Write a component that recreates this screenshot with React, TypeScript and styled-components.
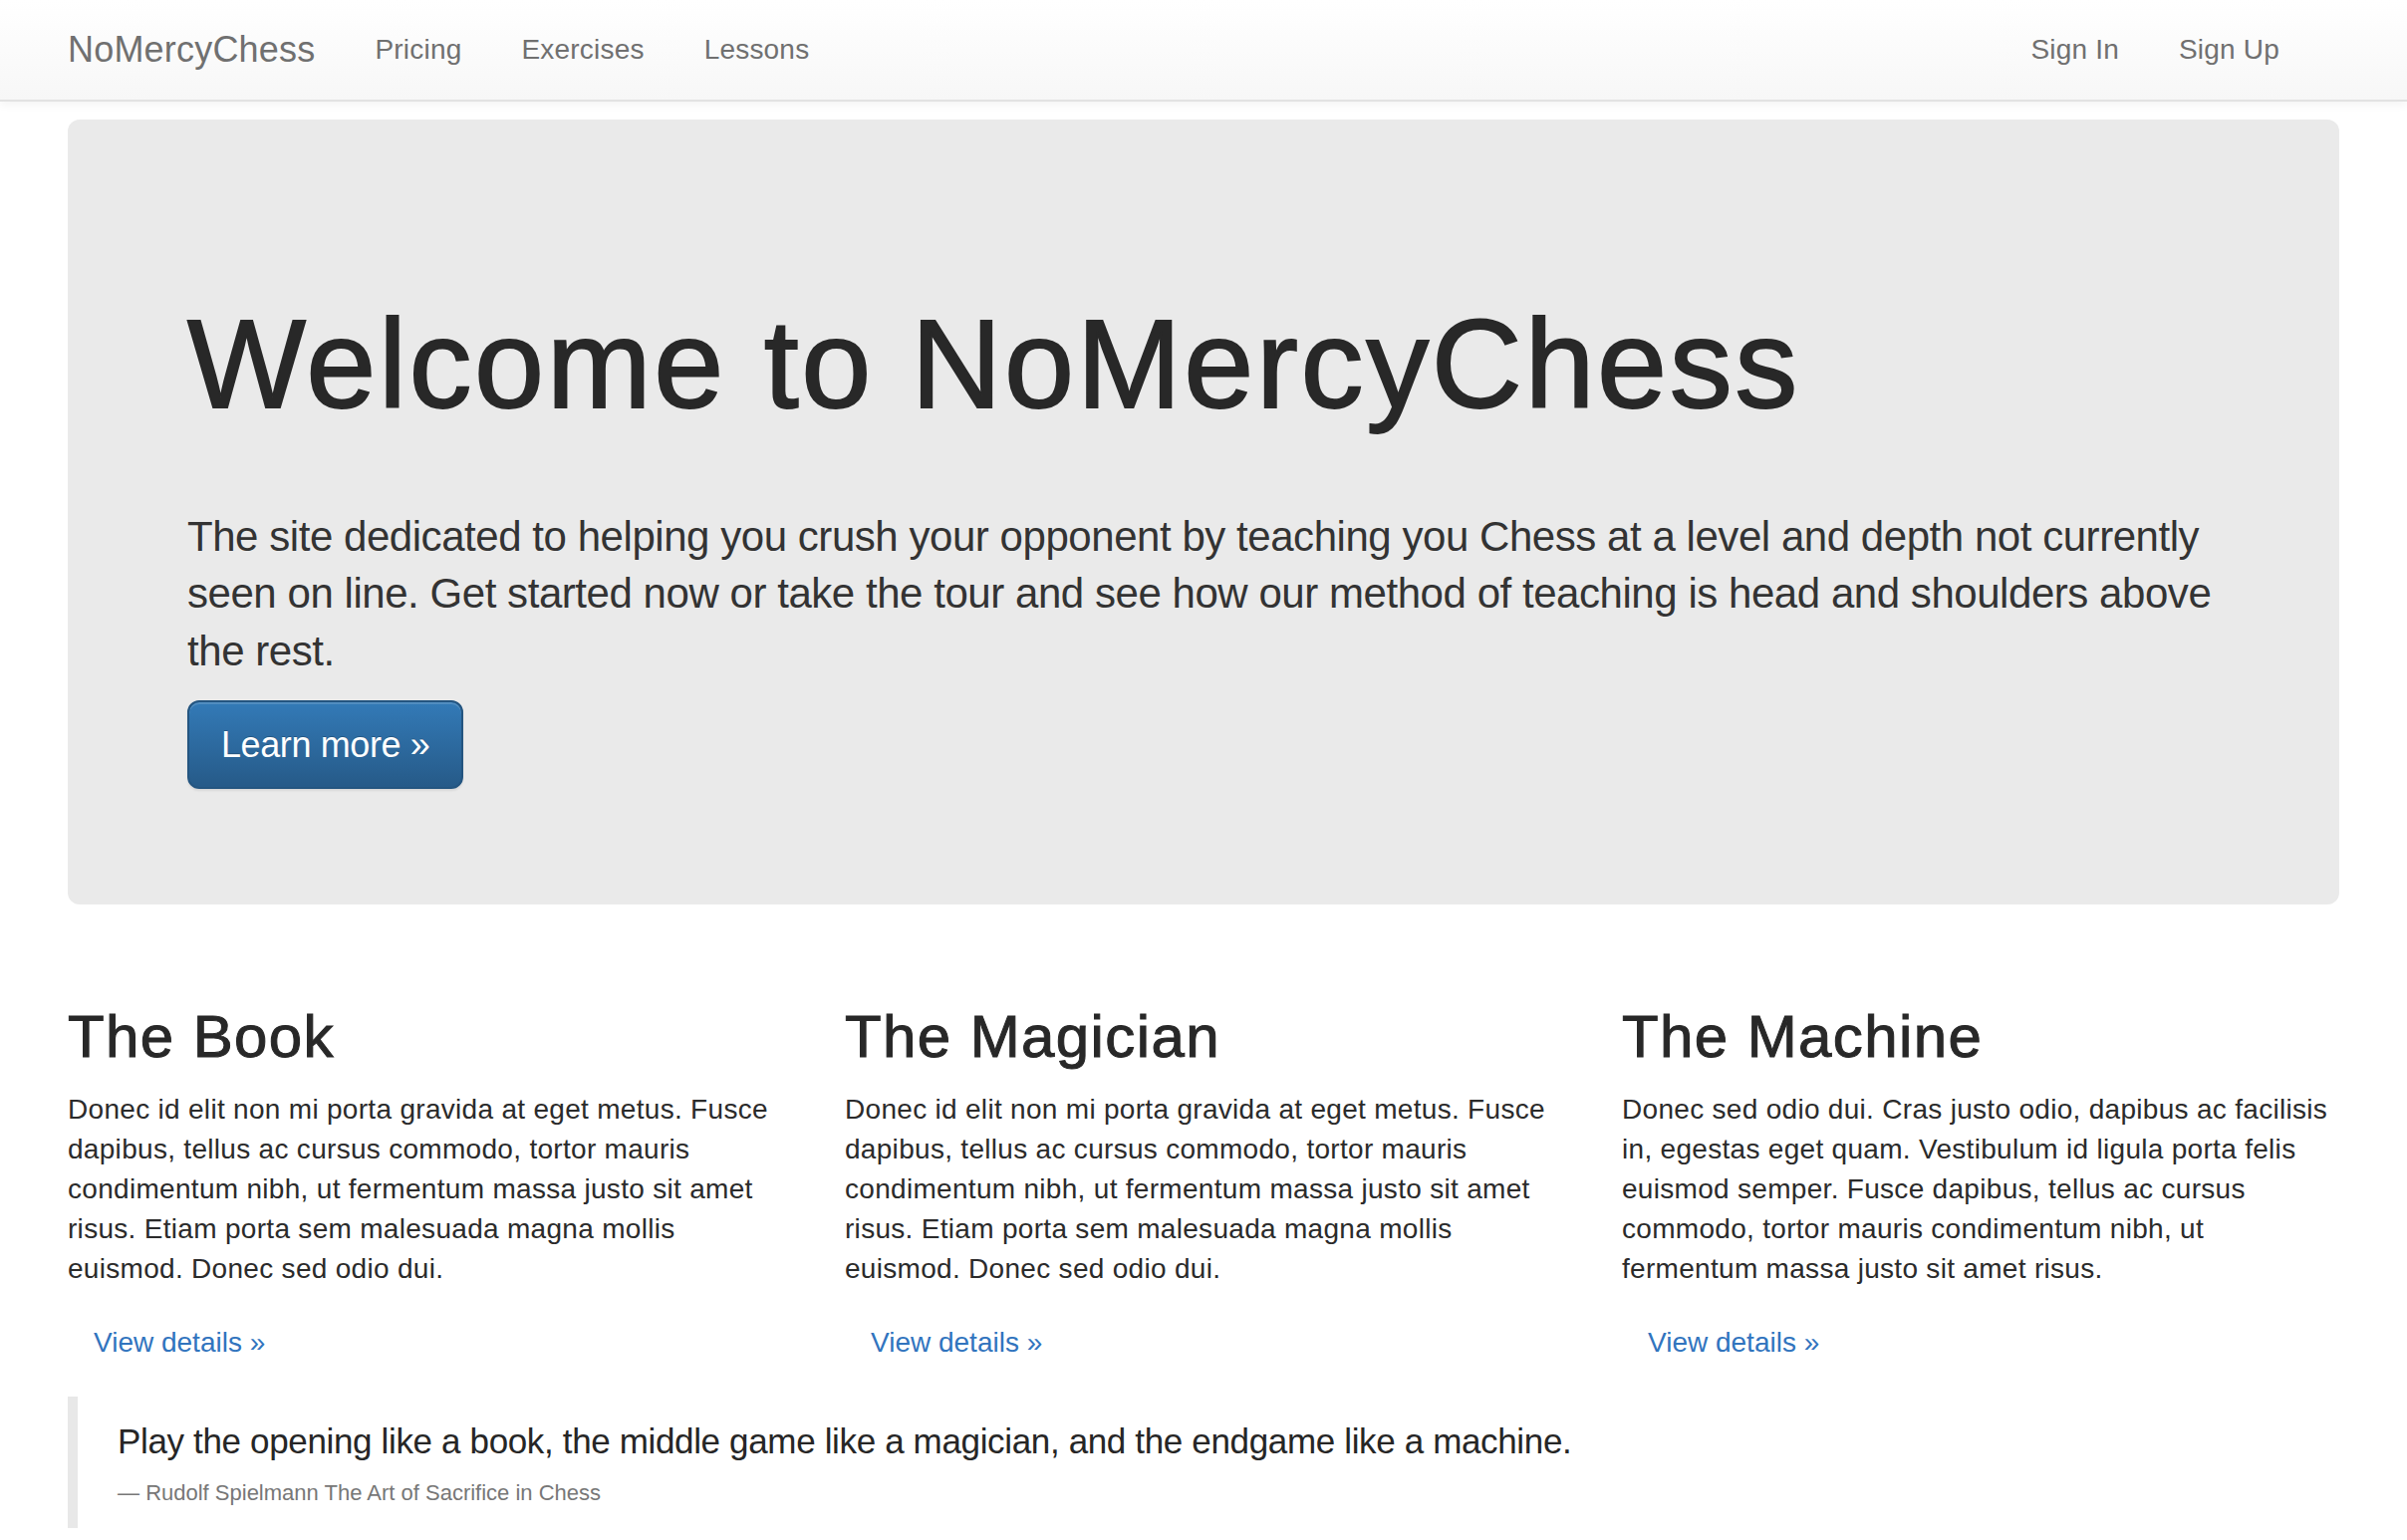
import React from "react";
import styled, { createGlobalStyle } from "styled-components";

const GlobalStyle = createGlobalStyle`
  html, body {
    margin: 0;
    padding: 0;
    background: #ffffff;
  }
  body {
    font-family: "Liberation Sans", Arial, Helvetica, sans-serif;
    color: #2b2b2b;
    -webkit-font-smoothing: antialiased;
  }
  * { box-sizing: border-box; }
`;

const Navbar = styled.header`
  height: 102px;
  background: linear-gradient(to bottom, #ffffff 0%, #f7f7f7 100%);
  border-bottom: 2px solid #e2e2e2;
  box-shadow: 0 2px 10px rgba(0, 0, 0, 0.06);
`;

const NavInner = styled.div`
  width: 2340px;
  margin: 0 auto;
  padding: 0 30px;
  height: 100px;
  display: flex;
  align-items: flex-start;
`;

const Brand = styled.a`
  display: block;
  margin-left: -30px;
  padding: 30px;
  font-size: 36px;
  line-height: 40px;
  color: #707070;
  text-decoration: none;
  letter-spacing: 0.2px;
`;

const NavList = styled.nav<{ $right?: boolean }>`
  display: flex;
  margin-left: ${(p) => (p.$right ? "auto" : "0")};
  margin-right: ${(p) => (p.$right ? "30px" : "0")};
`;

const NavLink = styled.a`
  display: block;
  padding: 30px;
  font-size: 28px;
  line-height: 40px;
  color: #707070;
  text-decoration: none;
  letter-spacing: 0.2px;
`;

const Container = styled.main`
  width: 2340px;
  margin: 0 auto;
  padding: 0 30px;
`;

const Jumbotron = styled.section`
  margin-top: 18px;
  margin-bottom: 60px;
  background: #eaeaea;
  border-radius: 12px;
  padding: 96px 120px 116px;
`;

const HeroTitle = styled.h1`
  margin: 81px 0 74px;
  font-size: 126px;
  line-height: 138.6px;
  font-weight: 400;
  color: #282828;
  -webkit-text-stroke: 1.8px #282828;
  letter-spacing: 2.6px;
`;

const HeroText = styled.p`
  margin: 0 0 21px;
  font-size: 42px;
  line-height: 57.5px;
  font-weight: 300;
  color: #333333;
  letter-spacing: -0.45px;
`;

const PrimaryButton = styled.a`
  display: inline-block;
  height: 89px;
  padding: 20px 32px;
  font-size: 36px;
  line-height: 45px;
  color: #ffffff;
  text-decoration: none;
  letter-spacing: -0.4px;
  border: 2px solid #245580;
  border-radius: 12px;
  background: linear-gradient(to bottom, #337ab7 0%, #265a88 100%);
  box-shadow: inset 0 2px 0 rgba(255, 255, 255, 0.15), 0 2px 2px rgba(0, 0, 0, 0.08);
  text-shadow: 0 -1px 0 rgba(0, 0, 0, 0.2);
`;

const Row = styled.div`
  display: grid;
  grid-template-columns: repeat(3, 1fr);
  margin: 0 -30px;
`;

const Column = styled.div`
  padding: 0 30px;
`;

const ColumnTitle = styled.h2`
  margin: 40px 0 20px;
  font-size: 60px;
  line-height: 66px;
  font-weight: 400;
  color: #282828;
  -webkit-text-stroke: 1px #282828;
  letter-spacing: 1.4px;
`;

const ColumnText = styled.p`
  margin: 0 0 20px;
  font-size: 28px;
  line-height: 40px;
  color: #2b2b2b;
  letter-spacing: 0.3px;
`;

const ButtonLine = styled.p`
  margin: 0 0 20px;
  height: 68px;
`;

const DetailsLink = styled.a`
  display: inline-block;
  padding: 12px 24px;
  border: 2px solid transparent;
  border-radius: 8px;
  font-size: 28px;
  line-height: 40px;
  color: #3174be;
  text-decoration: none;
`;

const Quote = styled.blockquote`
  margin: 0;
  padding: 20px 40px;
  border-left: 10px solid #e8e8e8;
`;

const QuoteText = styled.p`
  margin: 0 0 12px;
  font-size: 35px;
  line-height: 50px;
  font-weight: 300;
  color: #262626;
  letter-spacing: -0.35px;
`;

const QuoteFooter = styled.footer`
  font-size: 22px;
  line-height: 30px;
  color: #777777;
  &::before {
    content: "\\2014 \\00A0";
  }
`;

const features = [
  {
    title: "The Book",
    text: "Donec id elit non mi porta gravida at eget metus. Fusce dapibus, tellus ac cursus commodo, tortor mauris condimentum nibh, ut fermentum massa justo sit amet risus. Etiam porta sem malesuada magna mollis euismod. Donec sed odio dui.",
  },
  {
    title: "The Magician",
    text: "Donec id elit non mi porta gravida at eget metus. Fusce dapibus, tellus ac cursus commodo, tortor mauris condimentum nibh, ut fermentum massa justo sit amet risus. Etiam porta sem malesuada magna mollis euismod. Donec sed odio dui.",
  },
  {
    title: "The Machine",
    text: "Donec sed odio dui. Cras justo odio, dapibus ac facilisis in, egestas eget quam. Vestibulum id ligula porta felis euismod semper. Fusce dapibus, tellus ac cursus commodo, tortor mauris condimentum nibh, ut fermentum massa justo sit amet risus.",
  },
];

export default function App() {
  return (
    <>
      <GlobalStyle />
      <Navbar>
        <NavInner>
          <Brand href="#">NoMercyChess</Brand>
          <NavList>
            <NavLink href="#">Pricing</NavLink>
            <NavLink href="#">Exercises</NavLink>
            <NavLink href="#">Lessons</NavLink>
          </NavList>
          <NavList $right>
            <NavLink href="#">Sign In</NavLink>
            <NavLink href="#">Sign Up</NavLink>
          </NavList>
        </NavInner>
      </Navbar>
      <Container>
        <Jumbotron>
          <HeroTitle>Welcome to NoMercyChess</HeroTitle>
          <HeroText>
            The site dedicated to helping you crush your opponent by teaching you Chess at a level and
            depth not currently seen on line. Get started now or take the tour and see how our method
            of teaching is head and shoulders above the rest.
          </HeroText>
          <PrimaryButton href="#">Learn more »</PrimaryButton>
        </Jumbotron>
        <Row>
          {features.map((f) => (
            <Column key={f.title}>
              <ColumnTitle>{f.title}</ColumnTitle>
              <ColumnText>{f.text}</ColumnText>
              <ButtonLine>
                <DetailsLink href="#">View details »</DetailsLink>
              </ButtonLine>
            </Column>
          ))}
        </Row>
        <Quote>
          <QuoteText>
            Play the opening like a book, the middle game like a magician, and the endgame like a machine.
          </QuoteText>
          <QuoteFooter>Rudolf Spielmann The Art of Sacrifice in Chess</QuoteFooter>
        </Quote>
      </Container>
    </>
  );
}
